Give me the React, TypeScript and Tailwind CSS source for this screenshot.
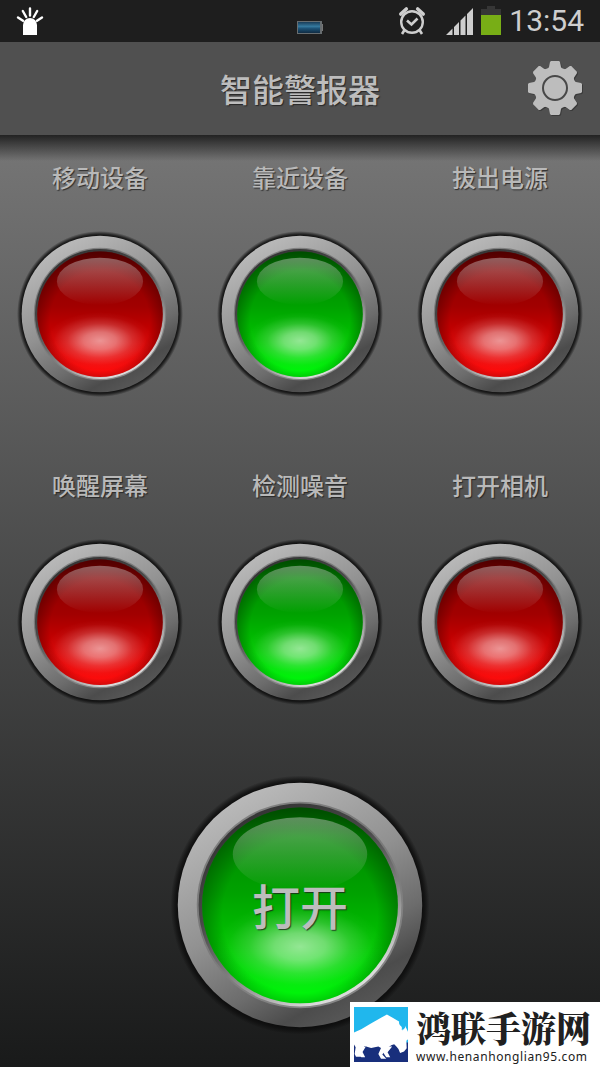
import React, { useState } from "react";

type Tone = "red" | "green";

const tones: Record<Tone, string[]> = {
  red: ["#5c0000", "#8c0000", "#a20000", "#d00000", "#fc0c0c", "#4a0000"],
  green: ["#005400", "#008a00", "#00a200", "#00c400", "#00f40a", "#004800"],
};

function Lamp({ tone, id, className }: { tone: Tone; id: string; className: string }) {
  const c = tones[tone];
  return (
    <svg viewBox="0 0 170 170" className={className} aria-hidden="true">
      <defs>
        <linearGradient id={id + "metal"} x1="0.25" y1="0.05" x2="0.75" y2="0.95">
          <stop offset="0" stopColor="#bababa" />
          <stop offset="0.45" stopColor="#919191" />
          <stop offset="0.72" stopColor="#6c6c6c" />
          <stop offset="0.88" stopColor="#4c4c4c" />
          <stop offset="1" stopColor="#585858" />
        </linearGradient>
        <linearGradient id={id + "bevel"} x1="0.25" y1="0.05" x2="0.75" y2="0.95">
          <stop offset="0" stopColor="#343434" />
          <stop offset="0.35" stopColor="#484848" />
          <stop offset="0.62" stopColor="#7c7c7c" />
          <stop offset="0.82" stopColor="#b0b0b0" />
          <stop offset="0.95" stopColor="#dadada" />
        </linearGradient>
        <linearGradient id={id + "lens"} x1="0" y1="0" x2="0" y2="1">
          <stop offset="0" stopColor={c[0]} />
          <stop offset="0.14" stopColor={c[1]} />
          <stop offset="0.44" stopColor={c[2]} />
          <stop offset="0.7" stopColor={c[3]} />
          <stop offset="0.95" stopColor={c[4]} />
        </linearGradient>
        <radialGradient id={id + "edge"} cx="0.5" cy="0.55" r="0.55">
          <stop offset="0.72" stopColor={c[5]} stopOpacity="0" />
          <stop offset="1" stopColor={c[5]} stopOpacity="0.65" />
        </radialGradient>
        <radialGradient id={id + "glow"}>
          <stop offset="0" stopColor="#fff" stopOpacity="0.58" />
          <stop offset="0.3" stopColor="#fff" stopOpacity="0.44" />
          <stop offset="0.6" stopColor="#fff" stopOpacity="0.17" />
          <stop offset="0.85" stopColor="#fff" stopOpacity="0.03" />
          <stop offset="1" stopColor="#fff" stopOpacity="0" />
        </radialGradient>
        <linearGradient id={id + "gloss"} x1="0" y1="0" x2="0" y2="1">
          <stop offset="0" stopColor="#d0d0d0" stopOpacity="0.45" />
          <stop offset="1" stopColor="#d0d0d0" stopOpacity="0" />
        </linearGradient>
        <radialGradient id={id + "rim"}>
          <stop offset="0.94" stopColor="#0c0c0c" />
          <stop offset="0.965" stopColor="#0c0c0c" stopOpacity="0.7" />
          <stop offset="1" stopColor="#0c0c0c" stopOpacity="0" />
        </radialGradient>
      </defs>
      <circle cx="85" cy="85" r="84" fill={`url(#${id}rim)`} />
      <circle cx="85" cy="85" r="79.300" fill={`url(#${id}metal)`} />
      <circle cx="85" cy="85" r="67" fill={`url(#${id}bevel)`} opacity="0.4" />
      <circle cx="85" cy="85" r="65.800" fill={`url(#${id}bevel)`} />
      <circle cx="85" cy="85.3" r="63.500" fill={`url(#${id}lens)`} />
      <circle cx="85" cy="85.3" r="63.500" fill={`url(#${id}edge)`} />
      <ellipse cx="85" cy="112" rx="55" ry="29" fill={`url(#${id}glow)`} />
      <ellipse cx="85" cy="52" rx="43.6" ry="24" fill={`url(#${id}gloss)`} />
    </svg>
  );
}

const sensors: { name: string; on: boolean }[] = [
  { name: "移动设备", on: false },
  { name: "靠近设备", on: true },
  { name: "拔出电源", on: false },
  { name: "唤醒屏幕", on: false },
  { name: "检测噪音", on: true },
  { name: "打开相机", on: false },
];

function StatusBar() {
  return (
    <div className="grid h-[42px] shrink-0 grid-cols-[1fr_auto_1fr] items-center bg-[#1e1e1e] px-4">
      <svg width="28" height="30" viewBox="0 0 28 30" aria-hidden="true">
        <path d="M7 29V19a7 7 0 0 1 14 0V29z" fill="#fff" />
        <path d="M14 2.500v7M6.800 5l3.400 6M21.200 5l-3.400 6M2 11.500l5 3.300M26 11.500l-5 3.300" stroke="#fff" strokeWidth="2.400" strokeLinecap="round" />
      </svg>
      <svg width="26" height="14" viewBox="0 0 26 14" className="mt-3 ml-5" aria-hidden="true">
        <defs>
          <linearGradient id="cell" x1="0" y1="0" x2="0" y2="1">
            <stop offset="0" stopColor="#183c58" />
            <stop offset="0.4" stopColor="#35799e" />
            <stop offset="0.6" stopColor="#1c5276" />
            <stop offset="1" stopColor="#102b42" />
          </linearGradient>
        </defs>
        <rect width="25" height="13" y="1" fill="#676d70" />
        <rect x="1" y="2" width="22" height="11" fill="url(#cell)" />
        <rect x="25" y="4" width="1" height="7" fill="#777" />
      </svg>
      <div className="flex items-center justify-self-end">
        <svg width="28" height="30" viewBox="0 0 28 30" className="mr-5" fill="none" stroke="#cecece" aria-hidden="true">
          <circle cx="14" cy="16" r="10.800" strokeWidth="2.400" />
          <path d="M9 14.500l4.500 4 6-6" strokeWidth="2.600" />
          <path d="M2.800 8l5.500-5M25.200 8l-5.500-5" strokeWidth="3.600" strokeLinecap="round" />
          <path d="M6.500 24l-2.500 4M21.500 24l2.500 4" strokeWidth="2.600" />
        </svg>
        <svg width="27" height="27" viewBox="0 0 27 27" className="mr-2" fill="#cecece" aria-hidden="true">
          <path d="M0 27l6.500-6.500V27zM8 27v-8l5-5v13zM14.500 27V12.500l5-5V27zM21 27V6l6-6v27z" />
        </svg>
        <svg width="20" height="30" viewBox="0 0 20 30" className="mr-2" aria-hidden="true">
          <path d="M6 0h8v3h6v7H0V3h6z" fill="#363636" />
          <path d="M0 9h20v20H0z" fill="#78ae16" />
        </svg>
        <span className="font-[Roboto,sans-serif] text-[30px] leading-10 text-[#cecece]">13:54</span>
      </div>
    </div>
  );
}

const shade = "[text-shadow:1px_1px_1px_rgba(30,30,30,0.8)]";

function GearShape() {
  return (
    <>
      <circle r="21" />
      {[0, 45, 90, 135].map((a) => (
        <path key={a} d="M-8-18l2-3 1-5 1-1h8l1 1 1 5 2 3V18l-2 3-1 5-1 1h-8l-1-1-1-5-2-3z" transform={`rotate(${a})`} />
      ))}
    </>
  );
}

function Watermark() {
  return (
    <a href="#site" className="absolute right-0 bottom-0 flex h-[65px] w-[250px] items-center gap-2 bg-white pl-1">
      <svg width="54" height="55" viewBox="0 0 164 164" preserveAspectRatio="none" className="shrink-0" aria-hidden="true">
        <path d="M0 0h164v110H0z" fill="#20b7ed" />
        <path d="M0 106h164v58H0z" fill="#182f7c" />
        <path d="M0 76L22 66 50 50 100 22l38 22q-2 10 6 14 3 4 0 10 10-4 10-14l10 20v22l-5 5 1 22-8 10-12 4-5-12-7-8-6-6-16 5 8-2-14 8-14 20 12 12h-16l-8-14 8-18-8-4-22 4-20-6-10 14 2 8 6 10H6l-4-8 3-20-5-8z" fill="#fff" />
        <path d="M36 118H26L12 132l10 18h12l-8-16zM116 118h-14l-16 14 12 18h12l-8-15z" fill="#fff" />
        <path d="M148 30q-16 12-9 22 12 6 7 18 14-8 9-20-10-6-7-20z" fill="#20b7ed" />
      </svg>
      <span className="flex flex-col gap-1 pt-1">
        <span className="font-['Noto_Serif_CJK_SC','Noto_Sans_CJK_SC',serif] text-[35px] leading-9 font-black whitespace-nowrap text-[#202020]">鸿联手游网</span>
        <span className="font-['Noto_Sans',sans-serif] text-xs leading-4 tracking-wider whitespace-nowrap text-[#202020]">www.henanhonglian95.com</span>
      </span>
    </a>
  );
}

export default function App() {
  const [states, setStates] = useState(sensors.map((s) => s.on));
  const [armed, setArmed] = useState(true);
  const toggle = (i: number) => setStates(states.map((v, k) => (k === i ? !v : v)));

  return (
    <div className="relative flex min-h-screen flex-col font-['Liberation_Sans','Noto_Sans_CJK_SC',sans-serif]">
      <StatusBar />
      <header className="grid h-[93px] shrink-0 grid-cols-[1fr_auto_1fr] items-center bg-[#505050] px-4">
        <h1 className={`col-start-2 pt-1 text-[32px] leading-10 font-medium text-[#bdbdbd] ${shade}`}>智能警报器</h1>
        <button type="button" aria-label="设置" className="justify-self-end">
          <svg width="58" height="58" viewBox="-29 -28 58 58" aria-hidden="true">
            <g fill="#2c2c2c" opacity="0.6" transform="translate(1 1)">
              <GearShape />
            </g>
            <g fill="#bdbdbd">
              <GearShape />
            </g>
            <circle r="12" fill="#bdbdbd" stroke="#484848" strokeWidth="2" />
          </svg>
        </button>
      </header>
      <main className="flex grow flex-col items-center bg-linear-to-b/srgb from-[#767676] to-[#191a1a]">
        <div className="h-[26px] w-full bg-linear-to-b/srgb from-[#222222] to-[#222222]/0" />
        <div className="grid w-full grid-cols-3 gap-y-[71px]">
          {sensors.map((s, i) => (
            <label key={s.name} className="flex cursor-pointer flex-col items-center gap-[33px]">
              <span className={`text-2xl leading-9 font-medium text-[#b9b9b9] ${shade}`}>{s.name}</span>
              <button type="button" aria-pressed={states[i]} aria-label={s.name} onClick={() => toggle(i)}>
                <Lamp tone={states[i] ? "green" : "red"} id={"s" + i} className="block size-[168px]" />
              </button>
            </label>
          ))}
        </div>
        <button type="button" onClick={() => setArmed(!armed)} className="mt-[68px] mb-6 grid place-items-center">
          <Lamp tone={armed ? "green" : "red"} id="main" className="col-start-1 row-start-1 size-[262px]" />
          <span className={`col-start-1 row-start-1 pt-2 text-5xl font-medium text-[#bdbdbd] ${shade}`}>打开</span>
        </button>
      </main>
      <Watermark />
    </div>
  );
}
